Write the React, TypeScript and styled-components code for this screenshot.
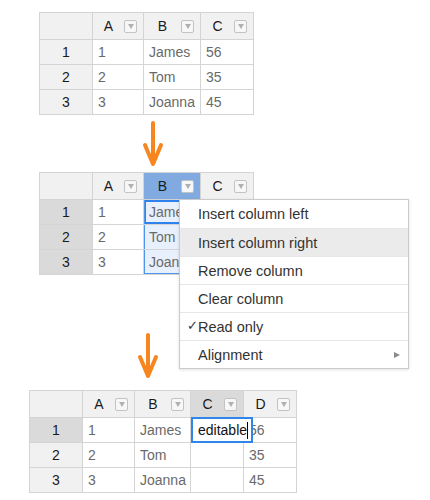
import styled, { createGlobalStyle, css } from "styled-components"

const GlobalStyle = createGlobalStyle`
   body {
      margin: 0;
      background: #ffffff;
      font-family: "Liberation Sans", Arial, Helvetica, sans-serif;
   }
`

const StyledPage = styled.div`
   display: flex;
   flex-direction: column;
   padding-top: 12px;
   width: 430px;
   height: 500px;
   box-sizing: border-box;
`

const StyledBlock = styled.div<{ $left: number; $top: number }>`
   position: relative;
   margin-left: ${(p) => p.$left}px;
   margin-top: ${(p) => p.$top}px;
   width: max-content;
`

const StyledTable = styled.table`
   border-collapse: collapse;
   table-layout: fixed;
   font-size: 14px;
`

const StyledHead = styled.th<{ $state?: "blue" | "gray" }>`
   height: 26px;
   padding: 0;
   border: 1px solid #d4d4d4;
   background: ${(p) => (p.$state === "blue" ? "#80aae0" : p.$state === "gray" ? "#dadada" : "#f1f1f1")};
   color: #1a1a1a;
   font-weight: normal;
`

const StyledHeadInner = styled.div`
   display: flex;
   align-items: center;
   padding-right: 6px;
`

const StyledHeadLabel = styled.span`
   flex: 1;
   text-align: center;
`

const StyledFilter = styled.span`
   display: flex;
   align-items: center;
   justify-content: center;
   width: 13px;
   height: 13px;
   border: 1px solid #c3c3c3;
   border-radius: 2px;
   background: #f7f7f7;
   box-sizing: border-box;
   &::after {
      content: "";
      border-left: 3px solid transparent;
      border-right: 3px solid transparent;
      border-top: 5px solid #b0b0b0;
      margin-top: 1px;
   }
`

const StyledRowHead = styled.td<{ $marked?: boolean }>`
   height: 24px;
   padding: 0;
   border: 1px solid #d4d4d4;
   background: ${(p) => (p.$marked ? "#dadada" : "#f1f1f1")};
   color: #1a1a1a;
   text-align: center;
`

const StyledCell = styled.td<{ $sel?: "top" | "mid" | "bottom" }>`
   position: relative;
   height: 24px;
   padding: 0 0 0 5px;
   border: 1px solid #d4d4d4;
   color: #6a6a6a;
   white-space: nowrap;
   overflow: visible;
   ${(p) =>
      p.$sel &&
      css`
         background: #e7f0fc;
         box-shadow: inset 1px 0 #4f95e9, inset -1px 0 #4f95e9
            ${p.$sel === "top" ? ", inset 0 0 0 2px #2f82ec" : ""}
            ${p.$sel === "bottom" ? ", inset 0 -1px #4f95e9" : ""};
      `}
`

const StyledClip = styled.div`
   overflow: hidden;
`

const StyledEditor = styled.div`
   position: absolute;
   left: 0;
   top: -1px;
   width: 62px;
   height: 26px;
   box-sizing: border-box;
   border: 2px solid #2f86ea;
   background: #ffffff;
   color: #111111;
   padding-left: 5px;
   display: flex;
   align-items: center;
   z-index: 2;
`

const StyledCaret = styled.span`
   display: inline-block;
   width: 1px;
   height: 17px;
   background: #000000;
`

const StyledMenu = styled.ul`
   position: absolute;
   left: 140px;
   top: 27px;
   width: 228px;
   margin: 0;
   padding: 0;
   list-style: none;
   background: #ffffff;
   border: 1px solid #cbcbcb;
   box-shadow: 0 1px 3px rgba(0, 0, 0, 0.12);
   z-index: 3;
   font-size: 14.5px;
   color: #333333;
`

const StyledMenuItem = styled.li<{ $hover?: boolean }>`
   position: relative;
   display: flex;
   align-items: center;
   height: 28px;
   padding-left: 18px;
   border-top: 1px solid #e6e6e6;
   background: ${(p) => (p.$hover ? "#ebebeb" : "transparent")};
   box-sizing: border-box;
   &:first-child {
      border-top: none;
   }
`

const StyledCheck = styled.span`
   position: absolute;
   left: 7px;
   top: 5px;
   font-size: 13px;
   color: #333333;
`

const StyledSubArrow = styled.span`
   position: absolute;
   right: 8px;
   top: 11px;
   border-top: 3px solid transparent;
   border-bottom: 3px solid transparent;
   border-left: 6px solid #8a8a8a;
`

const StyledArrow = styled.svg<{ $left: number; $top: number }>`
   display: block;
   margin-left: ${(p) => p.$left}px;
   margin-top: ${(p) => p.$top}px;
`

type TCol = { label: string; width: number; head?: "blue" | "gray" }
type TRow = { label: string; marked?: boolean; cells: string[] }

type TProps = {
   cols: TCol[]
   rows: TRow[]
   selCol?: number
   editor?: { row: number; col: number; text: string }
}

const Sheet: React.FC<TProps> = ({ cols, rows, selCol, editor }) => {
   const total = 53 + cols.reduce((s, c) => s + c.width, 0)
   return (
      <StyledTable style={{ width: total }}>
         <colgroup>
            <col style={{ width: 53 }} />
            {cols.map((c) => (
               <col key={c.label} style={{ width: c.width }} />
            ))}
         </colgroup>
         <thead>
            <tr>
               <StyledHead />
               {cols.map((c) => (
                  <StyledHead key={c.label} $state={c.head}>
                     <StyledHeadInner>
                        <StyledHeadLabel>{c.label}</StyledHeadLabel>
                        <StyledFilter />
                     </StyledHeadInner>
                  </StyledHead>
               ))}
            </tr>
         </thead>
         <tbody>
            {rows.map((r, ri) => (
               <tr key={r.label}>
                  <StyledRowHead $marked={r.marked}>{r.label}</StyledRowHead>
                  {r.cells.map((v, ci) => {
                     const sel =
                        selCol === ci ? (ri === 0 ? "top" : ri === rows.length - 1 ? "bottom" : "mid") : undefined
                     const isEdit = editor && editor.row === ri && editor.col === ci
                     return (
                        <StyledCell key={ci} $sel={sel}>
                           <StyledClip>{v}</StyledClip>
                           {isEdit && (
                              <StyledEditor>
                                 {editor.text}
                                 <StyledCaret />
                              </StyledEditor>
                           )}
                        </StyledCell>
                     )
                  })}
               </tr>
            ))}
         </tbody>
      </StyledTable>
   )
}

const DownArrow: React.FC<{ left: number; top: number }> = ({ left, top }) => (
   <StyledArrow $left={left} $top={top} width="22" height="46" viewBox="0 0 22 46">
      <g fill="none" stroke="#f7861f" strokeWidth="4" strokeLinecap="round" strokeLinejoin="round">
         <line x1="11" y1="2" x2="11" y2="42" />
         <polyline points="3,24 11,43 19,24" />
      </g>
   </StyledArrow>
)

const baseRows: TRow[] = [
   { label: "1", cells: ["1", "James", "56"] },
   { label: "2", cells: ["2", "Tom", "35"] },
   { label: "3", cells: ["3", "Joanna", "45"] },
]

const menuItems = [
   "Insert column left",
   "Insert column right",
   "Remove column",
   "Clear column",
   "Read only",
   "Alignment",
]

const App: React.FC = () => {
   return (
      <StyledPage>
         <GlobalStyle />
         <StyledBlock $left={39} $top={0}>
            <Sheet
               cols={[
                  { label: "A", width: 51 },
                  { label: "B", width: 57 },
                  { label: "C", width: 53 },
               ]}
               rows={baseRows}
            />
         </StyledBlock>
         <DownArrow left={142} top={6} />
         <StyledBlock $left={39} $top={5}>
            <Sheet
               cols={[
                  { label: "A", width: 51 },
                  { label: "B", width: 57, head: "blue" },
                  { label: "C", width: 53 },
               ]}
               rows={baseRows.map((r) => ({ ...r, marked: true }))}
               selCol={1}
            />
            <StyledMenu>
               {menuItems.map((m, i) => (
                  <StyledMenuItem key={m} $hover={i === 1}>
                     {m === "Read only" && <StyledCheck>✓</StyledCheck>}
                     {m}
                     {m === "Alignment" && <StyledSubArrow />}
                  </StyledMenuItem>
               ))}
            </StyledMenu>
         </StyledBlock>
         <DownArrow left={137} top={58} />
         <StyledBlock $left={29} $top={11}>
            <Sheet
               cols={[
                  { label: "A", width: 52 },
                  { label: "B", width: 56 },
                  { label: "C", width: 53, head: "gray" },
                  { label: "D", width: 53 },
               ]}
               rows={[
                  { label: "1", marked: true, cells: ["1", "James", "", "56"] },
                  { label: "2", cells: ["2", "Tom", "", "35"] },
                  { label: "3", cells: ["3", "Joanna", "", "45"] },
               ]}
               editor={{ row: 0, col: 2, text: "editable" }}
            />
         </StyledBlock>
      </StyledPage>
   )
}

export default App
